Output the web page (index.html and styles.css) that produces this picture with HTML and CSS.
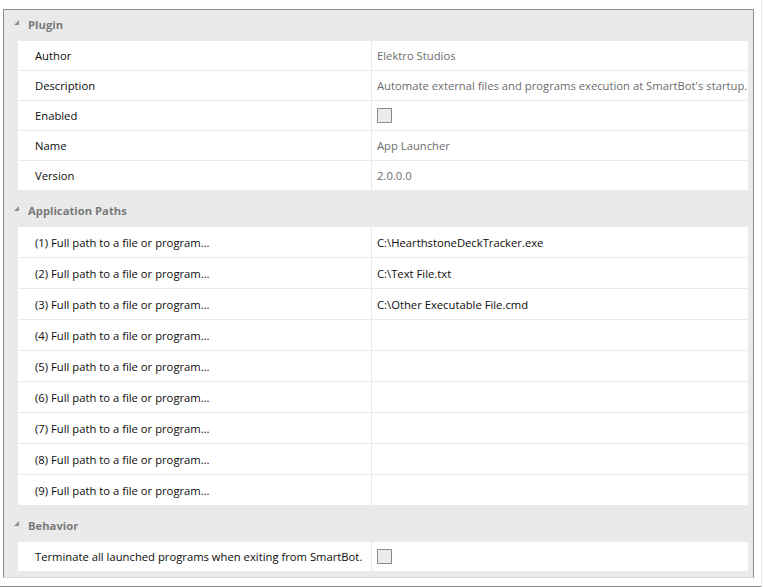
FILE: index.html
```html
<!DOCTYPE html>
<html>
<head>
<meta charset="utf-8">
<link rel="stylesheet" href="styles.css">
</head>
<body>
<div class="window">
  <div class="grid">
    <section class="cat">
      <div class="cat-head">
        <svg class="tri" width="5" height="5" viewBox="0 0 5 5"><polygon points="5,0 5,5 0,5"/></svg>
        <span>Plugin</span>
      </div>
      <div class="rows">
        <div class="row"><div class="name">Author</div><div class="value ro">Elektro Studios</div></div>
        <div class="row"><div class="name">Description</div><div class="value ro">Automate external files and programs execution at SmartBot's startup.</div></div>
        <div class="row"><div class="name">Enabled</div><div class="value"><span class="check"></span></div></div>
        <div class="row"><div class="name">Name</div><div class="value ro">App Launcher</div></div>
        <div class="row"><div class="name">Version</div><div class="value ro">2.0.0.0</div></div>
      </div>
    </section>
    <section class="cat">
      <div class="cat-head">
        <svg class="tri" width="5" height="5" viewBox="0 0 5 5"><polygon points="5,0 5,5 0,5"/></svg>
        <span>Application Paths</span>
      </div>
      <div class="rows tall">
        <div class="row"><div class="name">(1) Full path to a file or program…</div><div class="value">C:\HearthstoneDeckTracker.exe</div></div>
        <div class="row"><div class="name">(2) Full path to a file or program…</div><div class="value">C:\Text File.txt</div></div>
        <div class="row"><div class="name">(3) Full path to a file or program…</div><div class="value">C:\Other Executable File.cmd</div></div>
        <div class="row"><div class="name">(4) Full path to a file or program…</div><div class="value"></div></div>
        <div class="row"><div class="name">(5) Full path to a file or program…</div><div class="value"></div></div>
        <div class="row"><div class="name">(6) Full path to a file or program…</div><div class="value"></div></div>
        <div class="row"><div class="name">(7) Full path to a file or program…</div><div class="value"></div></div>
        <div class="row"><div class="name">(8) Full path to a file or program…</div><div class="value"></div></div>
        <div class="row"><div class="name">(9) Full path to a file or program…</div><div class="value"></div></div>
      </div>
    </section>
    <section class="cat">
      <div class="cat-head">
        <svg class="tri" width="5" height="5" viewBox="0 0 5 5"><polygon points="5,0 5,5 0,5"/></svg>
        <span>Behavior</span>
      </div>
      <div class="rows">
        <div class="row"><div class="name">Terminate all launched programs when exiting from SmartBot.</div><div class="value"><span class="check"></span></div></div>
      </div>
    </section>
  </div>
</div>
</body>
</html>
```
FILE: styles.css
```css
html, body {
  margin: 0;
  padding: 0;
  background: #ffffff;
}
body {
  font-family: "Open Sans", "Noto Sans", "DejaVu Sans", sans-serif;
  font-size: 11.25px;
  color: #0c0c0c;
}
.window {
  box-sizing: border-box;
  width: 762px;
  height: 587px;
  padding: 9px 0 0 3px;
  border-right: 1px solid #ececec;
  border-bottom: 1px solid #8a8a8a;
}
.grid {
  box-sizing: border-box;
  width: 751px;
  height: 569px;
  border: 1px solid #8c8c8c;
  border-bottom-color: #dcdcdc;
  background: #eaeaea;
  padding: 0 5px 0 14px;
}
.cat + .cat {
  margin-top: 6px;
}
.cat-head {
  height: 31px;
  margin-left: -14px;
  padding-left: 10px;
  display: flex;
  align-items: center;
  font-weight: bold;
  color: #7a7a7a;
}
.cat-head span {
  margin-left: 9px;
  padding-bottom: 3px;
}
.tri {
  fill: #8e8e8e;
  margin-bottom: 7px;
}
.rows {
  display: flex;
  flex-direction: column;
  gap: 1px;
}
.row {
  display: flex;
  height: 29px;
  background: #ffffff;
}
.tall .row {
  height: 30px;
}
.name {
  box-sizing: border-box;
  width: 354px;
  flex: none;
  padding-left: 17px;
  border-right: 1px solid #e9e9e9;
  display: flex;
  align-items: center;
  white-space: nowrap;
  overflow: hidden;
}
.value {
  flex: 1;
  padding-left: 5px;
  display: flex;
  align-items: center;
  white-space: nowrap;
  overflow: hidden;
}
.ro {
  color: #6d6d6d;
}
.check {
  box-sizing: border-box;
  width: 15px;
  height: 15px;
  border: 1px solid #8a8a8a;
  background: #ececec;
}
```
